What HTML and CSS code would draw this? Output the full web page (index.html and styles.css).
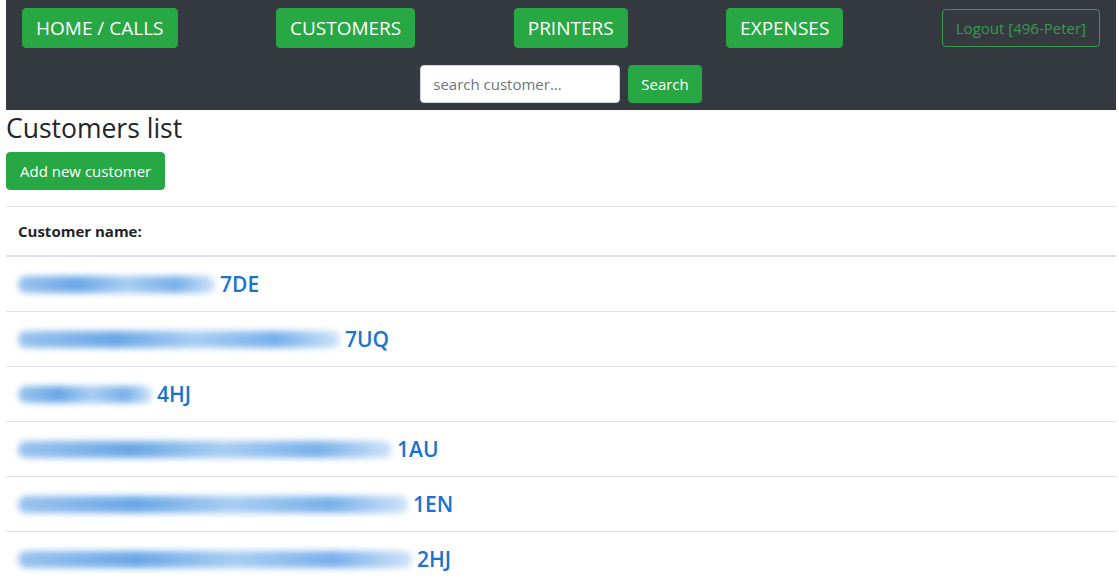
FILE: index.html
```html
<!DOCTYPE html>
<html lang="en">
<head>
  <meta charset="UTF-8">
  <meta name="viewport" content="width=device-width, initial-scale=1.0">
  <title>Customers list</title>
  <link rel="stylesheet" href="styles.css">
</head>
<body>
  <nav class="topbar">
    <div class="menu">
      <a class="btn btn-lg" href="#">HOME / CALLS</a>
      <a class="btn btn-lg" href="#">CUSTOMERS</a>
      <a class="btn btn-lg" href="#">PRINTERS</a>
      <a class="btn btn-lg" href="#">EXPENSES</a>
      <a class="btn btn-outline" href="#">Logout [496-Peter]</a>
    </div>
    <form class="search" onsubmit="return false">
      <input type="text" placeholder="search customer...">
      <button class="btn" type="submit">Search</button>
    </form>
  </nav>

  <h3 class="title">Customers list</h3>
  <a class="btn btn-add" href="#">Add new customer</a>

  <table class="customers">
    <thead>
      <tr><th>Customer name:</th></tr>
    </thead>
    <tbody>
      <tr><td><a href="#"><span class="hidden-name" style="width: 197px"></span>7DE</a></td></tr>
      <tr><td><a href="#"><span class="hidden-name" style="width: 322px"></span>7UQ</a></td></tr>
      <tr><td><a href="#"><span class="hidden-name" style="width: 134px"></span>4HJ</a></td></tr>
      <tr><td><a href="#"><span class="hidden-name" style="width: 374px"></span>1AU</a></td></tr>
      <tr><td><a href="#"><span class="hidden-name" style="width: 390px"></span>1EN</a></td></tr>
      <tr><td><a href="#"><span class="hidden-name" style="width: 394px"></span>2HJ</a></td></tr>
    </tbody>
  </table>
</body>
</html>
```

FILE: styles.css
```css
body { margin: 0; padding: 0 3px 0 6px; font-family: "Open Sans", "Liberation Sans", sans-serif; font-size: 16px; line-height: 1.5; color: #212529; background: #fff; }

.btn { display: inline-block; padding: 6px 12px; font-size: 16px; line-height: 24px; color: #fff; background: #28a745; border: 1px solid #28a745; border-radius: 4px; text-decoration: none; font-family: inherit; }
.btn-lg { padding: 7px 13px; font-size: 19px; line-height: 24px; border-radius: 4px; }
.btn-outline { background: transparent; color: #3a9a50; border-color: #3a9a50; padding: 6px 13px; font-size: 15px; }

.topbar { background: #343a40; padding: 8px 16px 7px; }
.menu { display: flex; justify-content: space-between; align-items: center; }
.search { display: flex; justify-content: center; gap: 8px; margin-top: 17px; }
.search input { width: 200px; box-sizing: border-box; height: 38px; padding: 6px 12px; font-size: 15px; font-family: inherit; border: 1px solid #ced4da; border-radius: 4px; }
.search input::placeholder { color: #6c757d; }
.search .btn { padding: 6px 12px; font-size: 15px; }

.title { margin: 0 0 8px; padding-top: 2px; font-size: 26.5px; font-weight: 400; line-height: 32px; }
.btn-add { font-size: 15px; padding: 6px 13px; }

.customers { width: 100%; border-collapse: collapse; margin-top: 16px; }
.customers th { text-align: left; padding: 12px; font-size: 15px; font-weight: 700; line-height: 24px; border-top: 1px solid #dee2e6; border-bottom: 2px solid #dee2e6; }
.customers td { padding: 12px; height: 30px; border-bottom: 1px solid #dee2e6; line-height: 30px; }
.customers tr:last-child td { border-bottom: 0; }
.customers a { display: block; height: 30px; color: #1a73d0; text-decoration: none; font-size: 21px; font-weight: 600; line-height: 30px; white-space: nowrap; }
.hidden-name { display: inline-block; vertical-align: middle; height: 17px; margin: -4px 5px 0 0; border-radius: 8px; background: linear-gradient(90deg, #9cc4ee, #6aa7e6 30%, #a8cdf2 55%, #78b0ea 80%, #cfe3f8); filter: blur(3px); }
```
